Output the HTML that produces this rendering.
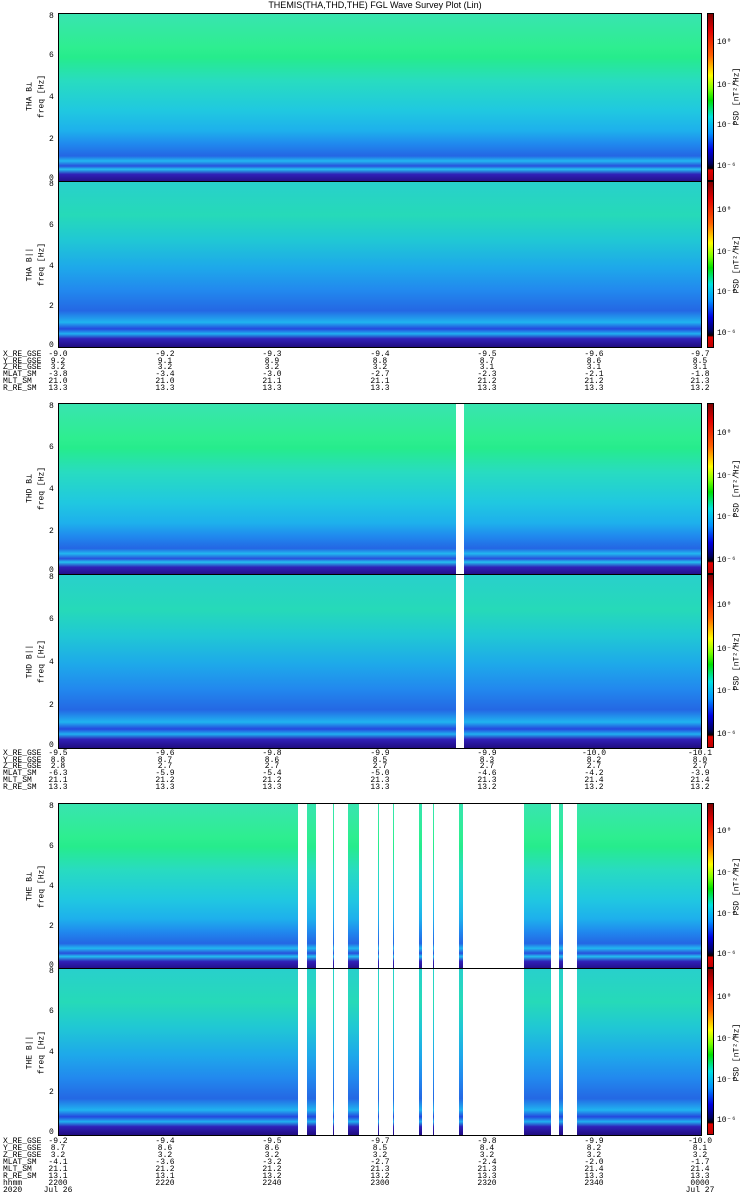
<!DOCTYPE html>
<html><head><meta charset="utf-8"><style>
body{margin:0;background:#fff;width:750px;height:1200px;position:relative;overflow:hidden;font-family:"Liberation Mono",monospace;color:#000}
.t{position:absolute;font-size:8px;line-height:8px;white-space:nowrap}
.p{position:absolute;left:58px;width:644px;border:1px solid #000;box-sizing:border-box;overflow:hidden}
.perp{background:
linear-gradient(180deg,#38e4b0 0%,#2eee90 20%,#26ec8c 26%,#28dcc0 40%,#20c8e0 58%,#1eb0ec 70%,#2088ee 78%,#2466e4 85%,#22b8f0 88%,#2850dc 91%,#24c0f0 93%,#3020b8 96%,#24108c 100%)}
.par{background:
linear-gradient(180deg,#28d0cc 0%,#26dab8 20%,#20c8d4 35%,#1ea8ea 52%,#2288ee 66%,#2468e4 78%,#20b4f0 85%,#2448de 89%,#20b0f0 92%,#3020b8 95%,#200c80 100%)}
.w{position:absolute;top:0;bottom:0;background:#fff}
.cb{position:absolute;left:707px;width:7px;background:linear-gradient(180deg,#800000 0%,#e00000 10%,#ff6000 25%,#ffff00 37%,#80ff00 45%,#00e000 52%,#00e0e0 62%,#0090ff 72%,#0000e0 82%,#000060 90%,#000000 93%,#e00000 94%,#c00000 100%);border:1px solid #000;box-sizing:border-box}
.rl{position:absolute;transform:rotate(-90deg);transform-origin:center;font-size:8px;white-space:nowrap;text-align:center;width:120px;line-height:9px}
.yl{position:absolute;left:49px;font-size:8px;line-height:8px}
.cl{position:absolute;left:717px;font-size:8px;line-height:8px}
.row{position:absolute;left:0;width:750px;height:7px;font-size:8px;line-height:7px}
.row span{position:absolute;transform:translateX(-50%)}
.row b{position:absolute;left:3px;font-weight:normal}
</style></head><body>
<div class="t" style="left:0;width:750px;text-align:center;top:1px;font-family:'Liberation Sans',sans-serif;font-size:9px">THEMIS(THA,THD,THE) FGL Wave Survey Plot (Lin)</div>

<!-- Block 1 -->
<div class="p perp" style="top:13px;height:169px"></div>
<div class="p par" style="top:181px;height:167px"></div>
<div class="cb" style="top:13px;height:168px"></div>
<div class="cb" style="top:181px;height:167px"></div>
<div class="rl" style="left:-30px;top:92px">THA B⊥</div>
<div class="rl" style="left:-18px;top:92px">freq [Hz]</div>
<div class="rl" style="left:-30px;top:260px">THA B||</div>
<div class="rl" style="left:-18px;top:260px">freq [Hz]</div>
<div class="rl" style="left:677px;top:92px">PSD [nT²/Hz]</div>
<div class="rl" style="left:677px;top:260px">PSD [nT²/Hz]</div>
<div class="yl" style="top:13px">8</div><div class="yl" style="top:52px">6</div><div class="yl" style="top:94px">4</div><div class="yl" style="top:136px">2</div><div class="yl" style="top:175px">0</div>
<div class="yl" style="top:181px">8</div><div class="yl" style="top:222px">6</div><div class="yl" style="top:263px">4</div><div class="yl" style="top:303px">2</div><div class="yl" style="top:342px">0</div>
<div class="cl" style="top:39px">10⁰</div><div class="cl" style="top:82px">10⁻²</div><div class="cl" style="top:122px">10⁻⁴</div><div class="cl" style="top:163px">10⁻⁶</div>
<div class="cl" style="top:207px">10⁰</div><div class="cl" style="top:249px">10⁻²</div><div class="cl" style="top:289px">10⁻⁴</div><div class="cl" style="top:330px">10⁻⁶</div>

<div class="row" style="top:351px"><b>X_RE_GSE</b><span style="left:58px">-9.0</span><span style="left:165px">-9.2</span><span style="left:272px">-9.3</span><span style="left:380px">-9.4</span><span style="left:487px">-9.5</span><span style="left:594px">-9.6</span><span style="left:700px">-9.7</span></div>
<div class="row" style="top:358px"><b>Y_RE_GSE</b><span style="left:58px">9.2</span><span style="left:165px">9.1</span><span style="left:272px">8.9</span><span style="left:380px">8.8</span><span style="left:487px">8.7</span><span style="left:594px">8.6</span><span style="left:700px">8.5</span></div>
<div class="row" style="top:364px"><b>Z_RE_GSE</b><span style="left:58px">3.2</span><span style="left:165px">3.2</span><span style="left:272px">3.2</span><span style="left:380px">3.2</span><span style="left:487px">3.1</span><span style="left:594px">3.1</span><span style="left:700px">3.1</span></div>
<div class="row" style="top:371px"><b>MLAT_SM</b><span style="left:58px">-3.8</span><span style="left:165px">-3.4</span><span style="left:272px">-3.0</span><span style="left:380px">-2.7</span><span style="left:487px">-2.3</span><span style="left:594px">-2.1</span><span style="left:700px">-1.8</span></div>
<div class="row" style="top:378px"><b>MLT_SM</b><span style="left:58px">21.0</span><span style="left:165px">21.0</span><span style="left:272px">21.1</span><span style="left:380px">21.1</span><span style="left:487px">21.2</span><span style="left:594px">21.2</span><span style="left:700px">21.3</span></div>
<div class="row" style="top:385px"><b>R_RE_SM</b><span style="left:58px">13.3</span><span style="left:165px">13.3</span><span style="left:272px">13.3</span><span style="left:380px">13.3</span><span style="left:487px">13.3</span><span style="left:594px">13.3</span><span style="left:700px">13.2</span></div>

<!-- Block 2 -->
<div class="p perp" style="top:403px;height:172px"><div class="w" style="left:397px;width:8px"></div></div>
<div class="p par" style="top:574px;height:175px"><div class="w" style="left:397px;width:8px"></div></div>
<div class="cb" style="top:403px;height:171px"></div>
<div class="cb" style="top:574px;height:174px"></div>
<div class="rl" style="left:-30px;top:484px">THD B⊥</div>
<div class="rl" style="left:-18px;top:484px">freq [Hz]</div>
<div class="rl" style="left:-30px;top:657px">THD B||</div>
<div class="rl" style="left:-18px;top:657px">freq [Hz]</div>
<div class="rl" style="left:677px;top:484px">PSD [nT²/Hz]</div>
<div class="rl" style="left:677px;top:657px">PSD [nT²/Hz]</div>
<div class="yl" style="top:403px">8</div><div class="yl" style="top:444px">6</div><div class="yl" style="top:486px">4</div><div class="yl" style="top:528px">2</div><div class="yl" style="top:567px">0</div>
<div class="yl" style="top:574px">8</div><div class="yl" style="top:616px">6</div><div class="yl" style="top:659px">4</div><div class="yl" style="top:702px">2</div><div class="yl" style="top:742px">0</div>
<div class="cl" style="top:430px">10⁰</div><div class="cl" style="top:473px">10⁻²</div><div class="cl" style="top:514px">10⁻⁴</div><div class="cl" style="top:557px">10⁻⁶</div>
<div class="cl" style="top:602px">10⁰</div><div class="cl" style="top:646px">10⁻²</div><div class="cl" style="top:688px">10⁻⁴</div><div class="cl" style="top:731px">10⁻⁶</div>

<div class="row" style="top:750px"><b>X_RE_GSE</b><span style="left:58px">-9.5</span><span style="left:165px">-9.6</span><span style="left:272px">-9.8</span><span style="left:380px">-9.9</span><span style="left:487px">-9.9</span><span style="left:594px">-10.0</span><span style="left:700px">-10.1</span></div>
<div class="row" style="top:757px"><b>Y_RE_GSE</b><span style="left:58px">8.8</span><span style="left:165px">8.7</span><span style="left:272px">8.6</span><span style="left:380px">8.5</span><span style="left:487px">8.3</span><span style="left:594px">8.2</span><span style="left:700px">8.0</span></div>
<div class="row" style="top:763px"><b>Z_RE_GSE</b><span style="left:58px">2.8</span><span style="left:165px">2.7</span><span style="left:272px">2.7</span><span style="left:380px">2.7</span><span style="left:487px">2.7</span><span style="left:594px">2.7</span><span style="left:700px">2.7</span></div>
<div class="row" style="top:770px"><b>MLAT_SM</b><span style="left:58px">-6.3</span><span style="left:165px">-5.9</span><span style="left:272px">-5.4</span><span style="left:380px">-5.0</span><span style="left:487px">-4.6</span><span style="left:594px">-4.2</span><span style="left:700px">-3.9</span></div>
<div class="row" style="top:777px"><b>MLT_SM</b><span style="left:58px">21.1</span><span style="left:165px">21.2</span><span style="left:272px">21.2</span><span style="left:380px">21.3</span><span style="left:487px">21.3</span><span style="left:594px">21.4</span><span style="left:700px">21.4</span></div>
<div class="row" style="top:784px"><b>R_RE_SM</b><span style="left:58px">13.3</span><span style="left:165px">13.3</span><span style="left:272px">13.3</span><span style="left:380px">13.3</span><span style="left:487px">13.2</span><span style="left:594px">13.2</span><span style="left:700px">13.2</span></div>

<!-- Block 3 -->
<div class="p perp" style="top:803px;height:166px">
<div class="w" style="left:239px;width:9px"></div><div class="w" style="left:257px;width:17px"></div><div class="w" style="left:275px;width:14px"></div><div class="w" style="left:300px;width:19px"></div><div class="w" style="left:320px;width:14px"></div><div class="w" style="left:335px;width:25px"></div><div class="w" style="left:363px;width:11px"></div><div class="w" style="left:375px;width:25px"></div><div class="w" style="left:404px;width:61px"></div><div class="w" style="left:492px;width:8px"></div><div class="w" style="left:504px;width:14px"></div></div>
<div class="p par" style="top:968px;height:168px">
<div class="w" style="left:239px;width:9px"></div><div class="w" style="left:257px;width:17px"></div><div class="w" style="left:275px;width:14px"></div><div class="w" style="left:300px;width:19px"></div><div class="w" style="left:320px;width:14px"></div><div class="w" style="left:335px;width:25px"></div><div class="w" style="left:363px;width:11px"></div><div class="w" style="left:375px;width:25px"></div><div class="w" style="left:404px;width:61px"></div><div class="w" style="left:492px;width:8px"></div><div class="w" style="left:504px;width:14px"></div></div>
<div class="cb" style="top:803px;height:165px"></div>
<div class="cb" style="top:968px;height:167px"></div>
<div class="rl" style="left:-30px;top:882px">THE B⊥</div>
<div class="rl" style="left:-18px;top:882px">freq [Hz]</div>
<div class="rl" style="left:-30px;top:1048px">THE B||</div>
<div class="rl" style="left:-18px;top:1048px">freq [Hz]</div>
<div class="rl" style="left:677px;top:882px">PSD [nT²/Hz]</div>
<div class="rl" style="left:677px;top:1048px">PSD [nT²/Hz]</div>
<div class="yl" style="top:803px">8</div><div class="yl" style="top:843px">6</div><div class="yl" style="top:883px">4</div><div class="yl" style="top:923px">2</div><div class="yl" style="top:962px">0</div>
<div class="yl" style="top:968px">8</div><div class="yl" style="top:1008px">6</div><div class="yl" style="top:1049px">4</div><div class="yl" style="top:1089px">2</div><div class="yl" style="top:1129px">0</div>
<div class="cl" style="top:828px">10⁰</div><div class="cl" style="top:870px">10⁻²</div><div class="cl" style="top:911px">10⁻⁴</div><div class="cl" style="top:951px">10⁻⁶</div>
<div class="cl" style="top:994px">10⁰</div><div class="cl" style="top:1036px">10⁻²</div><div class="cl" style="top:1077px">10⁻⁴</div><div class="cl" style="top:1117px">10⁻⁶</div>

<div class="row" style="top:1138px"><b>X_RE_GSE</b><span style="left:58px">-9.2</span><span style="left:165px">-9.4</span><span style="left:272px">-9.5</span><span style="left:380px">-9.7</span><span style="left:487px">-9.8</span><span style="left:594px">-9.9</span><span style="left:700px">-10.0</span></div>
<div class="row" style="top:1145px"><b>Y_RE_GSE</b><span style="left:58px">8.7</span><span style="left:165px">8.6</span><span style="left:272px">8.6</span><span style="left:380px">8.5</span><span style="left:487px">8.4</span><span style="left:594px">8.2</span><span style="left:700px">8.1</span></div>
<div class="row" style="top:1152px"><b>Z_RE_GSE</b><span style="left:58px">3.2</span><span style="left:165px">3.2</span><span style="left:272px">3.2</span><span style="left:380px">3.2</span><span style="left:487px">3.2</span><span style="left:594px">3.2</span><span style="left:700px">3.2</span></div>
<div class="row" style="top:1159px"><b>MLAT_SM</b><span style="left:58px">-4.1</span><span style="left:165px">-3.6</span><span style="left:272px">-3.2</span><span style="left:380px">-2.7</span><span style="left:487px">-2.4</span><span style="left:594px">-2.0</span><span style="left:700px">-1.7</span></div>
<div class="row" style="top:1166px"><b>MLT_SM</b><span style="left:58px">21.1</span><span style="left:165px">21.2</span><span style="left:272px">21.2</span><span style="left:380px">21.3</span><span style="left:487px">21.3</span><span style="left:594px">21.4</span><span style="left:700px">21.4</span></div>
<div class="row" style="top:1173px"><b>R_RE_SM</b><span style="left:58px">13.1</span><span style="left:165px">13.1</span><span style="left:272px">13.2</span><span style="left:380px">13.2</span><span style="left:487px">13.3</span><span style="left:594px">13.3</span><span style="left:700px">13.3</span></div>
<div class="row" style="top:1180px"><b>hhmm</b><span style="left:58px">2200</span><span style="left:165px">2220</span><span style="left:272px">2240</span><span style="left:380px">2300</span><span style="left:487px">2320</span><span style="left:594px">2340</span><span style="left:700px">0000</span></div>
<div class="row" style="top:1187px"><b>2020</b><span style="left:58px">Jul 26</span><span style="left:700px">Jul 27</span></div>
</body></html>
